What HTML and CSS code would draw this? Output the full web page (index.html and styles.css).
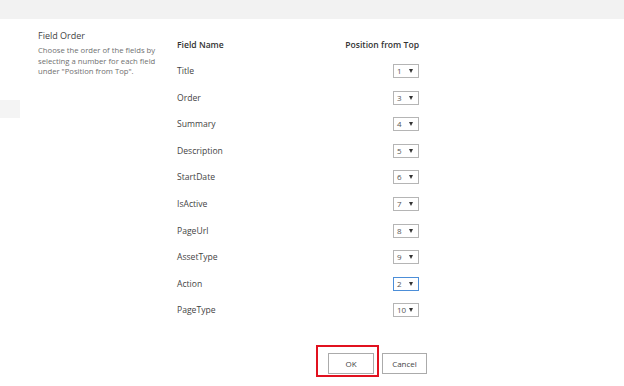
FILE: index.html
```html
<!DOCTYPE html>
<html>
<head>
<meta charset="utf-8">
<link rel="stylesheet" href="styles.css">
</head>
<body>
<div class="topbar"></div>
<div class="page">
  <div class="side">
    <div class="sidetab"></div>
  </div>
  <div class="section">
    <div class="title">Field Order</div>
    <div class="desc">Choose the order of the fields by selecting a number for each field under "Position from Top".</div>
  </div>
  <div class="content">
    <div class="table">
      <div class="row head"><span>Field Name</span><span>Position from Top</span></div>
      <div class="row"><span>Title</span><span class="sel">1<i></i></span></div>
      <div class="row"><span>Order</span><span class="sel">3<i></i></span></div>
      <div class="row"><span>Summary</span><span class="sel">4<i></i></span></div>
      <div class="row"><span>Description</span><span class="sel">5<i></i></span></div>
      <div class="row"><span>StartDate</span><span class="sel">6<i></i></span></div>
      <div class="row"><span>IsActive</span><span class="sel">7<i></i></span></div>
      <div class="row"><span>PageUrl</span><span class="sel">8<i></i></span></div>
      <div class="row"><span>AssetType</span><span class="sel">9<i></i></span></div>
      <div class="row"><span>Action</span><span class="sel focus">2<i></i></span></div>
      <div class="row"><span>PageType</span><span class="sel">10<i></i></span></div>
    </div>
    <div class="buttons">
      <span class="highlight"><button class="btn">OK</button></span>
      <button class="btn cancel">Cancel</button>
    </div>
  </div>
</div>
</body>
</html>
```

FILE: styles.css
```css
html, body {
  margin: 0;
  padding: 0;
  background: #fff;
  font-family: "Open Sans", "Noto Sans", sans-serif;
}
.topbar {
  height: 19px;
  background: #f2f2f2;
}
.page {
  display: flex;
  align-items: flex-start;
}
.side {
  width: 38px;
  padding-top: 81px;
}
.sidetab {
  width: 20px;
  height: 18px;
  background: #f4f4f4;
}
.section {
  width: 139px;
  padding-top: 11px;
}
.title {
  font-size: 9px;
  color: #444;
  line-height: 12px;
}
.desc {
  margin-top: 3px;
  font-size: 7.7px;
  line-height: 10.5px;
  color: #707070;
  width: 122px;
}
.content {
  width: 250px;
  padding-top: 18px;
}
.table {
  width: 242px;
}
.row {
  display: flex;
  justify-content: space-between;
  align-items: center;
  height: 26.55px;
  font-size: 8.6px;
  color: #444;
}
.row.head {
  height: 16px;
  margin-bottom: 5px;
  font-weight: 600;
  color: #333;
}
.sel {
  position: relative;
  box-sizing: border-box;
  width: 26px;
  height: 14px;
  border: 1px solid #b5b5b5;
  font-size: 8px;
  line-height: 12px;
  padding-left: 3px;
  color: #555;
}
.sel.focus {
  border-color: #4c8ed8;
}
.sel i {
  position: absolute;
  right: 5px;
  top: 4px;
  width: 0;
  height: 0;
  border-left: 2.5px solid transparent;
  border-right: 2.5px solid transparent;
  border-top: 4px solid #333;
}
.buttons {
  display: flex;
  align-items: flex-end;
  margin-top: 22px;
  padding-left: 139px;
}
.highlight {
  display: inline-flex;
  border: 2px solid #e1111f;
  padding: 6px 3px 1px 10px;
}
.btn {
  box-sizing: border-box;
  width: 46px;
  height: 21px;
  border: 1px solid #ababab;
  background: #fff;
  font-family: "Open Sans", "Noto Sans", sans-serif;
  font-size: 8px;
  color: #444;
  padding: 0;
}
.cancel {
  width: 45px;
  margin-left: 3px;
  margin-bottom: 3px;
}
```
